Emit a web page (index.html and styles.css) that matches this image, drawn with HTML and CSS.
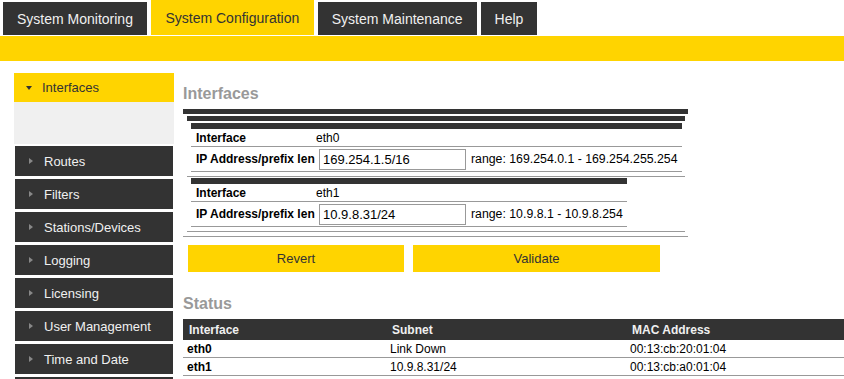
FILE: index.html
```html
<!DOCTYPE html>
<html lang="en">
<head>
    <meta charset="UTF-8">
    <title>System Configuration - Interfaces</title>
    <link rel="stylesheet" href="styles.css">
</head>
<body>
    <div class="topnav">
        <a class="tab">System Monitoring</a>
        <a class="tab active">System Configuration</a>
        <a class="tab">System Maintenance</a>
        <a class="tab">Help</a>
    </div>
    <div class="subbar"></div>

    <div class="page">
        <nav class="sidebar">
            <div class="side-item open"><span class="arrow-down"></span>Interfaces</div>
            <div class="side-panel"></div>
            <div class="side-item"><span class="arrow-right"></span>Routes</div>
            <div class="side-item"><span class="arrow-right"></span>Filters</div>
            <div class="side-item"><span class="arrow-right"></span>Stations/Devices</div>
            <div class="side-item"><span class="arrow-right"></span>Logging</div>
            <div class="side-item"><span class="arrow-right"></span>Licensing</div>
            <div class="side-item"><span class="arrow-right"></span>User Management</div>
            <div class="side-item"><span class="arrow-right"></span>Time and Date</div>
            <div class="side-item"></div>
        </nav>

        <main class="content">
            <h2>Interfaces</h2>

            <div class="frame">
                <div class="frame-bar"></div>
                <div class="frame-body">
                    <div class="frame">
                        <div class="frame-bar middle-bar"></div>
                        <div class="frame-row">
                            <table class="iface">
                                <tr class="iface-bar"><td colspan="3"></td></tr>
                                <tr class="iface-name">
                                    <td class="label">Interface</td>
                                    <td class="value">eth0</td>
                                    <td></td>
                                </tr>
                                <tr class="iface-ip">
                                    <td class="label">IP Address/prefix len</td>
                                    <td class="value"><input type="text" value="169.254.1.5/16"></td>
                                    <td class="range">range: 169.254.0.1 - 169.254.255.254</td>
                                </tr>
                            </table>
                        </div>
                        <div class="frame-row">
                            <table class="iface">
                                <tr class="iface-bar"><td colspan="3"></td></tr>
                                <tr class="iface-name">
                                    <td class="label">Interface</td>
                                    <td class="value">eth1</td>
                                    <td></td>
                                </tr>
                                <tr class="iface-ip">
                                    <td class="label">IP Address/prefix len</td>
                                    <td class="value"><input type="text" value="10.9.8.31/24"></td>
                                    <td class="range">range: 10.9.8.1 - 10.9.8.254</td>
                                </tr>
                            </table>
                        </div>
                    </div>
                </div>
            </div>

            <div class="actions">
                <button class="btn btn-revert">Revert</button>
                <button class="btn btn-validate">Validate</button>
            </div>

            <h2 class="status-title">Status</h2>
            <table class="status">
                <thead>
                    <tr>
                        <th class="col-if">Interface</th>
                        <th class="col-subnet">Subnet</th>
                        <th>MAC Address</th>
                    </tr>
                </thead>
                <tbody>
                    <tr>
                        <td class="ifname">eth0</td>
                        <td>Link Down</td>
                        <td>00:13:cb:20:01:04</td>
                    </tr>
                    <tr>
                        <td class="ifname">eth1</td>
                        <td>10.9.8.31/24</td>
                        <td>00:13:cb:a0:01:04</td>
                    </tr>
                </tbody>
            </table>
        </main>
    </div>
</body>
</html>
```

FILE: styles.css
```css
body {
    margin: 0;
    font-family: "Liberation Sans", Arial, sans-serif;
    color: #000;
    background: #fff;
}

/* top navigation */
.topnav {
    display: flex;
    align-items: flex-end;
    gap: 4px;
    padding: 0 0 1px 3px;
    height: 35px;
}

.tab {
    display: flex;
    align-items: center;
    height: 33px;
    padding: 1px 14px 0;
    box-sizing: border-box;
    background: #333;
    color: #f0f0f0;
    font-size: 14px;
    cursor: pointer;
}

.tab.active {
    height: 35px;
    padding: 0 14.5px;
    background: #ffd400;
    color: #333;
}

.subbar {
    height: 25px;
    background: #ffd400;
}

.page {
    display: flex;
    gap: 9px;
    padding: 12px 0 0 14px;
}

/* sidebar */
.sidebar {
    width: 160px;
    flex-shrink: 0;
}

.side-item {
    display: flex;
    align-items: center;
    height: 30px;
    margin: 3px 1px 0;
    padding-left: 14px;
    background: #333;
    color: #f0f0f0;
    font-size: 13px;
}

.side-item.open {
    height: 29px;
    margin: 0;
    padding-left: 12px;
    background: #ffd400;
    color: #333;
}

.side-panel {
    height: 42px;
    background: #f0f0f0;
}

.side-panel + .side-item {
    margin-top: 2px;
}

.arrow-right {
    width: 0;
    height: 0;
    border-top: 3.5px solid transparent;
    border-bottom: 3.5px solid transparent;
    border-left: 4px solid #888;
    margin-right: 11px;
}

.arrow-down {
    width: 0;
    height: 0;
    border-left: 3.5px solid transparent;
    border-right: 3.5px solid transparent;
    border-top: 4px solid #333;
    margin-right: 10px;
}

/* main content */
.content {
    flex: 1;
    min-width: 0;
}

.content h2 {
    margin: 12px 0 6px;
    font-size: 16px;
    line-height: 18px;
    color: #999;
}

.frame {
    width: max-content;
    border-bottom: 1px solid #999;
}

.frame .frame {
    width: auto;
    border-bottom: none;
}

.frame-bar {
    height: 5px;
    background: #333;
}

.middle-bar {
    margin-bottom: 1px;
}

.frame-body {
    padding: 2px 3px 4px 4px;
}

.frame-row {
    padding: 1px 3px 4px 4px;
    border-bottom: 1px solid #999;
}

.iface {
    border-spacing: 0;
    font-size: 12px;
}

.iface td {
    padding: 0;
    white-space: nowrap;
}

.iface-bar td {
    height: 6px;
    background: #333;
}

.iface-name td {
    height: 17px;
    border-bottom: 1px solid #999;
}

.iface-ip td {
    height: 24px;
    border-bottom: 1px solid #999;
}

.iface .label {
    width: 119px;
    padding-left: 5px;
    font-weight: bold;
}

.iface .value {
    padding-left: 1px;
}

.iface .range {
    padding: 0 4px 0 5px;
    font-size: 12.3px;
}

.iface input {
    display: block;
    box-sizing: border-box;
    width: 147px;
    height: 21px;
    margin-left: 3px;
    padding: 0 3px;
    border: 1px solid #999;
    font-family: inherit;
    font-size: 13px;
    color: #000;
}

.actions {
    display: flex;
    gap: 9px;
    margin-top: 8px;
    padding-left: 5px;
}

.btn {
    height: 27px;
    border: none;
    background: #ffd400;
    color: #333;
    font-family: inherit;
    font-size: 13px;
    cursor: pointer;
}

.btn-revert {
    width: 216px;
}

.btn-validate {
    width: 247px;
}

.content .status-title {
    margin-top: 23px;
}

.status {
    width: 100%;
    border-spacing: 0;
    font-size: 12px;
}

.status th {
    height: 21px;
    padding: 0 0 0 6px;
    background: #333;
    color: #f0f0f0;
    text-align: left;
}

.status .col-if {
    width: 197px;
}

.status .col-subnet {
    width: 234px;
}

.status td {
    height: 17px;
    padding: 0 0 0 4px;
    border-bottom: 1px solid #999;
}

.status .ifname {
    font-weight: bold;
}
```
